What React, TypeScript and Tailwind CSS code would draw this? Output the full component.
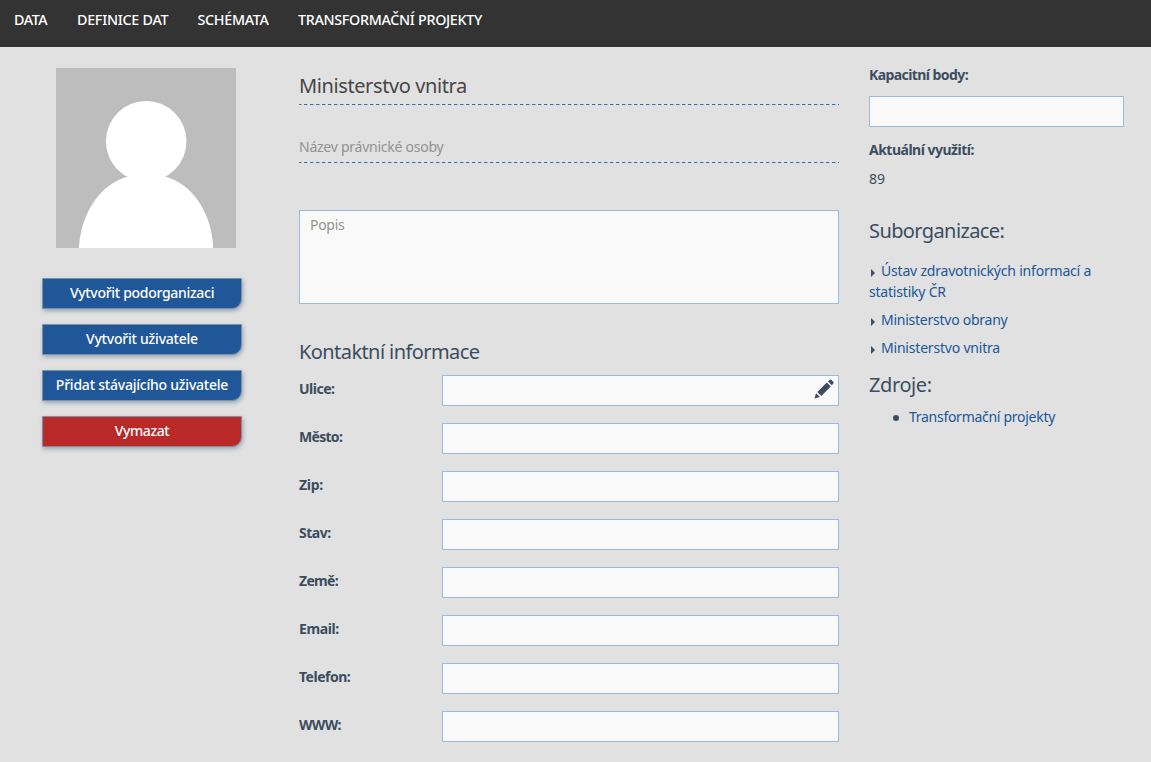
import type { ReactNode } from 'react';

const NAV = [
  { label: 'DATA', cls: 'w-[63px] tracking-[-0.4px]' },
  { label: 'DEFINICE DAT', cls: 'w-[120.5px] tracking-[-0.27px]' },
  { label: 'SCHÉMATA', cls: 'w-[100.5px] tracking-[-0.3px]' },
  { label: 'TRANSFORMAČNÍ PROJEKTY', cls: 'tracking-[-0.31px]' },
];

const ACTIONS = [
  { label: 'Vytvořit podorganizaci', cls: 'bg-[#205798] tracking-[-0.3px]' },
  { label: 'Vytvořit uživatele', cls: 'bg-[#205798] tracking-[-0.22px]' },
  { label: 'Přidat stávajícího uživatele', cls: 'bg-[#205798] tracking-[-0.22px]' },
  { label: 'Vymazat', cls: 'bg-[#b82927] tracking-[-0.4px]' },
];

const FIELDS = [
  { label: 'Ulice:', cls: 'tracking-[-0.5px]', edit: true },
  { label: 'Město:', cls: 'tracking-[-0.7px]' },
  { label: 'Zip:', cls: 'tracking-[-0.3px]' },
  { label: 'Stav:', cls: 'tracking-[-0.5px]' },
  { label: 'Země:', cls: 'tracking-[-0.7px]' },
  { label: 'Email:', cls: 'tracking-[-0.4px]' },
  { label: 'Telefon:', cls: 'tracking-[-0.5px]' },
  { label: 'WWW:', cls: 'tracking-[-0.7px]' },
];

function Avatar() {
  return (
    <svg className="ml-[14px] block h-[180px] w-[180px]" viewBox="0 0 180 180">
      <rect width="180" height="180" fill="#bdbdbd" />
      <circle cx="90.2" cy="73.3" r="40.3" fill="#fff" />
      <path d="M22.800 180C25 145 44 116 72 108.500Q90 104 109 108.500C137 116 156 146 157.200 180Z" fill="#fff" />
    </svg>
  );
}

function Pencil() {
  return (
    <svg className="h-5 w-5" viewBox="0 0 20 20" fill="#3b4d60">
      <path d="M0.500 19.500L2 14.300L6 18Z" />
      <path d="M3.300 12.900L12.800 3.500L16.800 7.500L7.300 16.900Z" />
      <path d="M14 2.400L15.800 0.700Q16.500 0.200 17.200 0.800L19.400 3Q19.900 3.700 19.300 4.400L17.800 6.200Z" />
    </svg>
  );
}

function Dashes() {
  return (
    <svg className="block h-px w-[540px]">
      <line x1="0" y1="0.5" x2="540" y2="0.5" stroke="#2f70b5" strokeWidth="1" strokeDasharray="3.4 2.6" strokeDashoffset="1" />
    </svg>
  );
}

function Bullet({ children, className }: { children: ReactNode; className: string }) {
  return (
    <li className={'mb-[7px] text-[#205798] ' + className}>
      <svg className="mr-[6px] ml-[2px] inline-block h-[8px] w-[4px] align-[-1px]" viewBox="0 0 4 8">
        <path d="M0 0L4 4L0 8Z" fill="#3b4d60" />
      </svg>
      {children}
    </li>
  );
}

export default function App() {
  return (
    <div className="h-[762px] w-[1151px] overflow-hidden bg-[#e1e1e1] font-['Noto_Sans','Open_Sans',sans-serif] text-[14px] leading-[21px] text-[#3b4d60]">
      <nav className="flex h-[47px] bg-[#333] pt-[9px] pl-[14px] text-[14.3px] font-medium text-white">
        {NAV.map((n) => (
          <a key={n.label} className={'whitespace-nowrap ' + n.cls}>{n.label}</a>
        ))}
      </nav>
      <div className="flex pl-[42px]">
        <aside className="w-[257px] shrink-0 pt-[21px]">
          <Avatar />
          <div className="mt-[30px] flex flex-col gap-[15.5px]">
            {ACTIONS.map((a) => (
              <button
                key={a.label}
                className={'h-[30.5px] w-[200px] rounded-br-[10px] border border-[#7e91a4] pb-[2px] text-center font-medium whitespace-nowrap text-white shadow-[1px_2px_4px_rgba(60,90,130,0.45)] ' + a.cls}
              >
                {a.label}
              </button>
            ))}
          </div>
        </aside>

        <main className="w-[540px] shrink-0 pt-[21px]">
          <h1 className="h-[36px] pt-[3px] text-[20px] leading-[30px] tracking-[-0.4px] whitespace-nowrap text-[#464646]">Ministerstvo vnitra</h1>
          <Dashes />
          <div className="mt-[31px] h-[26px] tracking-[-0.25px] text-[#929292]">Název právnické osoby</div>
          <Dashes />
          <div className="mt-[47px] h-[94px] border border-[#9cbbd9] bg-[#f9f9f9] px-[10px] pt-[3px] tracking-[-0.3px] text-[#929292]">Popis</div>
          <h2 className="mt-[33px] text-[20px] leading-[30px] tracking-[-0.58px] whitespace-nowrap">Kontaktní informace</h2>
          <div className="mt-[8px] flex flex-col gap-[17px]">
            {FIELDS.map((f) => (
              <div key={f.label} className="flex h-[31px]">
                <label className={'w-[143px] pt-[3px] font-bold ' + f.cls}>{f.label}</label>
                <div className="flex flex-1 justify-end border border-[#9cbbd9] bg-[#f9f9f9] pt-[3px] pr-[4px]">{f.edit && <Pencil />}</div>
              </div>
            ))}
          </div>
        </main>

        <aside className="ml-[30px] w-[255px] shrink-0 pt-[17px]">
          <div className="font-bold tracking-[-0.58px]">Kapacitní body:</div>
          <div className="mt-[11px] h-[31px] border border-[#9cbbd9] bg-[#f9f9f9]" />
          <div className="mt-[12px] font-bold tracking-[-0.5px]">Aktuální využití:</div>
          <div className="mt-[8px]">89</div>
          <h2 className="mt-[27px] text-[20px] leading-[30px] tracking-[-0.6px]">Suborganizace:</h2>
          <ul className="mt-[14px]">
            <Bullet className="tracking-[-0.2px]">Ústav zdravotnických informací a<br />statistiky ČR</Bullet>
            <Bullet className="tracking-[-0.25px]">Ministerstvo obrany</Bullet>
            <Bullet className="tracking-[-0.2px]">Ministerstvo vnitra</Bullet>
          </ul>
          <h2 className="mt-[12px] text-[20px] leading-[30px] tracking-[-0.4px]">Zdroje:</h2>
          <div className="mt-[6px] flex items-center pl-[24px] text-[#205798]">
            <span className="mt-[2px] mr-[10px] h-[6px] w-[6px] rounded-full bg-[#3b4d60]" />
            <span className="tracking-[-0.28px]">Transformační projekty</span>
          </div>
        </aside>
      </div>
    </div>
  );
}
